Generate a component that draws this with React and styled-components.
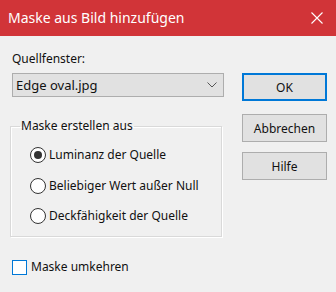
import React, { useState } from 'react'
import styled, { createGlobalStyle } from 'styled-components'

const Global = createGlobalStyle`
  html, body {
    margin: 0;
    padding: 0;
    background: #f0f0f0;
  }
  body {
    font-family: "Noto Sans", "Open Sans", sans-serif;
    font-size: 12px;
    color: #111;
  }
`

const Dialog = styled.div`
  width: 336px;
  height: 292px;
  background: #f0f0f0;
  overflow: hidden;
`

const TitleBar = styled.div`
  height: 36px;
  background: #d13438;
  color: #fff;
  display: flex;
  align-items: center;
  justify-content: space-between;
  padding: 0 13px 0 8px;
  box-sizing: border-box;
`

const Title = styled.div`
  font-size: 14px;
  line-height: 20px;
  margin-top: -1px;
`

const Body = styled.div`
  display: flex;
  padding: 0 9px 0 12px;
`

const LeftCol = styled.div`
  width: 212px;
  padding-top: 15px;
`

const RightCol = styled.div`
  width: 85px;
  margin-left: 18px;
  padding-top: 37px;
  display: flex;
  flex-direction: column;
`

const Label = styled.div`
  line-height: 16px;
  height: 16px;
`

const Select = styled.div`
  margin-top: 6px;
  height: 24px;
  box-sizing: border-box;
  border: 1px solid #adadad;
  background: #e1e1e1;
  display: flex;
  align-items: center;
  justify-content: space-between;
  padding: 0 6px 0 3px;
  font-size: 13px;
`

const Group = styled.fieldset`
  margin: 21px 0 0 -2px;
  width: 212px;
  box-sizing: border-box;
  border: 1px solid #d9d9d9;
  box-shadow: 1px 1px 0 #fff, inset 1px 1px 0 #fff;
  padding: 13px 0 12px 19px;
`

const Legend = styled.legend`
  padding: 0 1px;
  margin-left: -10px;
  line-height: 16px;
`

const RadioRow = styled.label`
  display: flex;
  align-items: center;
  height: 16px;
  line-height: 16px;
  & + & {
    margin-top: 14.5px;
  }
`

const RadioDot = styled.span`
  width: 16px;
  height: 16px;
  box-sizing: border-box;
  border-radius: 50%;
  border: 1px solid #333;
  background: #fff;
  margin-right: 3px;
  display: flex;
  align-items: center;
  justify-content: center;
  &::after {
    content: '';
    width: 8px;
    height: 8px;
    border-radius: 50%;
    background: ${p => (p.$on ? '#333' : 'transparent')};
  }
`

const CheckRow = styled.label`
  display: flex;
  align-items: center;
  margin-top: 22px;
  height: 16px;
  line-height: 16px;
`

const CheckBox = styled.span`
  width: 15px;
  height: 15px;
  box-sizing: border-box;
  border: 1px solid #0078d7;
  background: #fff;
  margin-right: 4px;
`

const Button = styled.div`
  height: 28px;
  box-sizing: border-box;
  background: #e1e1e1;
  border: ${p => (p.$primary ? '2px solid #0078d7' : '1px solid #adadad')};
  display: flex;
  align-items: center;
  justify-content: center;
  margin-bottom: ${p => p.$gap}px;
`

const options = [
  'Luminanz der Quelle',
  'Beliebiger Wert außer Null',
  'Deckfähigkeit der Quelle',
]

export default function App() {
  const [mode, setMode] = useState(0)
  return (
    <Dialog>
      <Global />
      <TitleBar>
        <Title>Maske aus Bild hinzufügen</Title>
        <svg width="12" height="12" viewBox="0 0 12 12">
          <path d="M0.5 0.5 L11.5 11.5 M11.5 0.5 L0.5 11.5" stroke="#fff" strokeWidth="1.1" />
        </svg>
      </TitleBar>
      <Body>
        <LeftCol>
          <Label>Quellfenster:</Label>
          <Select>
            <span>Edge oval.jpg</span>
            <svg width="10" height="6" viewBox="0 0 10 6">
              <path d="M0.5 0.5 L5 5 L9.5 0.5" fill="none" stroke="#555" strokeWidth="1" />
            </svg>
          </Select>
          <Group>
            <Legend>Maske erstellen aus</Legend>
            {options.map((o, i) => (
              <RadioRow key={o} onClick={() => setMode(i)}>
                <RadioDot $on={mode === i} />
                {o}
              </RadioRow>
            ))}
          </Group>
          <CheckRow>
            <CheckBox />
            Maske umkehren
          </CheckRow>
        </LeftCol>
        <RightCol>
          <Button $primary $gap={13}>OK</Button>
          <Button $gap={10}>Abbrechen</Button>
          <Button $gap={0}>Hilfe</Button>
        </RightCol>
      </Body>
    </Dialog>
  )
}
